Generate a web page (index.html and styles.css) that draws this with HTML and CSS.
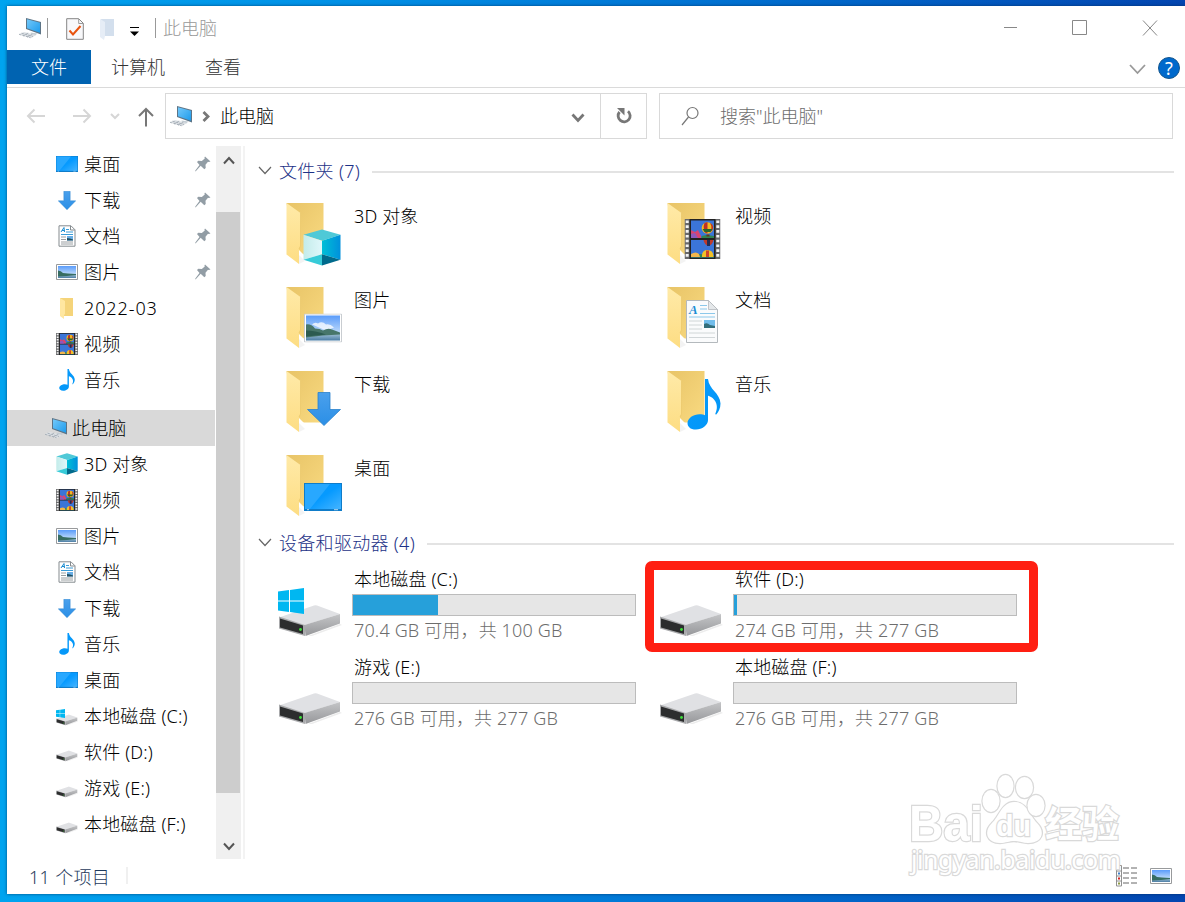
FILE: index.html
```html
<!DOCTYPE html>
<html lang="zh-CN">
<head>
  <meta charset="UTF-8">
  <title>此电脑</title>
  <link rel="stylesheet" href="styles.css">
</head>
<body>
<svg class="sprite" width="0" height="0">
  <defs>
    <linearGradient id="g-back" x1="0" y1="0" x2="1" y2="1"><stop offset="0" stop-color="#e8c467"/><stop offset="1" stop-color="#f9da81"/></linearGradient>
    <linearGradient id="g-front" x1="0" y1="0" x2="0" y2="1"><stop offset="0" stop-color="#ffeaa8"/><stop offset="1" stop-color="#fddd83"/></linearGradient>
    <linearGradient id="g-screen" x1="0" y1="0" x2="1" y2="1"><stop offset="0" stop-color="#72c8fa"/><stop offset="1" stop-color="#1d9bec"/></linearGradient>
    <linearGradient id="g-sky" x1="0" y1="0" x2="0" y2="1"><stop offset="0" stop-color="#5a9cfa"/><stop offset="1" stop-color="#eaf5fb"/></linearGradient>
    <linearGradient id="g-sea" x1="0" y1="0" x2="0" y2="1"><stop offset="0" stop-color="#a4c4d8"/><stop offset="1" stop-color="#4b7da5"/></linearGradient>
    <linearGradient id="g-down" x1="0" y1="0" x2="0" y2="1"><stop offset="0" stop-color="#4aa0ec"/><stop offset="1" stop-color="#2b8fe6"/></linearGradient>
    <linearGradient id="g-cubel"><stop offset="0" stop-color="#c3ecea"/><stop offset="1" stop-color="#e0f7fa"/></linearGradient>
    <linearGradient id="g-cuber"><stop offset="0" stop-color="#00bfd6"/><stop offset="1" stop-color="#0090dc"/></linearGradient>
    <linearGradient id="g-side" x1="0" y1="0" x2="0" y2="1"><stop offset="0" stop-color="#c4c5c7"/><stop offset="1" stop-color="#96979a"/></linearGradient>
    <linearGradient id="g-note" x1="0" y1="0" x2="1" y2="1"><stop offset="0" stop-color="#0a9bff"/><stop offset="1" stop-color="#0096f5"/></linearGradient>
    <linearGradient id="g-desk" x1="0" y1="0" x2="1" y2="1"><stop offset=".5" stop-color="#069aff"/><stop offset="1" stop-color="#45b4ff"/></linearGradient>
  </defs>

  <symbol id="i-pc" viewBox="0 0 24 22">
    <path d="M8 1l15 4v12.500L8 12z" fill="#5d7486"/>
    <path d="M9 2.300l13 3.500v10L9 11.200z" fill="url(#g-screen)"/>
    <path d="M12.500 15.500l7 1-2.500 2-4-1z" fill="#c3ccd3"/>
    <path d="M1 17l5-2 12 3-5 3.300z" fill="#dde1e5"/>
    <path d="M1 17.300l11.500 3.400M3.500 16.200L15 19.500M5 19l6-3.500M9 20l6-3" stroke="#a4adb5" stroke-width=".9" stroke-dasharray="2.500 1" fill="none"/>
  </symbol>
  <symbol id="i-desktop" viewBox="0 0 38 28" preserveAspectRatio="none">
    <path d="M0 0h38v28H0z" fill="#0f7cc9"/>
    <path d="M1 1h36v25H1z" fill="url(#g-desk)"/>
    <path d="M1 1h25L6 26H1z" fill="#28a8ff"/>
    <path d="M3 26.700h2M30 26.700h4" stroke="#fff" stroke-width=".7"/>
  </symbol>
  <symbol id="i-down" viewBox="0 0 34 34" preserveAspectRatio="none">
    <path d="M11 .5h12v17h10.500L17 33.500.500 17.500H11z" fill="url(#g-down)" stroke="#2a81cd" stroke-width=".8"/>
  </symbol>
  <symbol id="i-pic" viewBox="0 0 38 29" preserveAspectRatio="none">
    <path d="M.5.5h37v28H.5z" fill="#fff" stroke="#c9cdd1"/>
    <path d="M2 2h34v25H2z" fill="url(#g-sky)"/>
    <path d="M8 11q3-3 6-1 4-3 8 1 4-1 8 3l-8 3z" fill="#fff" opacity=".75"/>
    <path d="M2 20h34v7H2z" fill="url(#g-sea)"/>
    <path d="M2 11q5-1 9 4 5 0 8 2 5-3 9-1l8 3v2l-17 1-17 2z" fill="#47766a"/>
    <path d="M2 17q9 0 20 4l-20 2z" fill="#2c5b50"/>
  </symbol>
  <symbol id="i-pic-s" viewBox="0 0 22 16">
    <path d="M.5.5h21v15H.5z" fill="#fff" stroke="#989a9c"/>
    <path d="M2 2h18v12H2z" fill="url(#g-sky)"/>
    <path d="M2 10.500h18V14H2z" fill="url(#g-sea)"/>
    <path d="M2 6.500q3 0 5 2.500l5 .5 8 .5v1l-9 1-9 .500z" fill="#376d62"/>
  </symbol>
  <symbol id="i-doc" viewBox="0 0 32 43" preserveAspectRatio="none">
    <path d="M.5.5h22l9 9v33H.5z" fill="#fafbfc" stroke="#b4b9bd"/>
    <path d="M22.500.5v9h9z" fill="#e5e8ea" stroke="#b4b9bd" stroke-width=".8"/>
    <text x="3" y="14" class="doc-letter">A</text>
    <path d="M14 5.500h7M14 9h7M14 13.500h15M3 17h26" stroke="#8cc8ea" stroke-width="1"/>
    <path d="M3 21h13M3 25h13M3 29h13M3 33h26M3 37.500h26" stroke="#ccd1d4" stroke-width=".9"/>
    <path d="M18 20h11v8H18z" fill="#72bdeb"/><path d="M18 24q3-2 6 1l5 1v2H18z" fill="#336e7b"/>
  </symbol>
  <!-- heavier version of the document for 22px -->
  <symbol id="i-doc-s" viewBox="0 0 18 22">
    <path d="M1 .8h12l4 4v16.400H1z" fill="#fff" stroke="#858b8f"/>
    <path d="M12.500 1v4h4.300" fill="none" stroke="#858b8f"/>
    <path d="M3 7l3-4.500L6.500 7M4 5.500h2.500" fill="none" stroke="#198bd0"/>
    <path d="M8 4.500h3M8 7h7M3 9.500h12" stroke="#3a9cd8"/>
    <path d="M3 12h5M3 14.500h5M3 17h12M3 19h12" stroke="#9a9fa2"/>
    <path d="M9 11h6v4.500H9z" fill="#69aee5"/><path d="M9 13l3 .5 3 1v1H9z" fill="#224f60"/>
  </symbol>
  <symbol id="i-video" viewBox="0 0 36 40" preserveAspectRatio="none">
    <path d="M0 0h36v40H0z" fill="#68696b"/>
    <path d="M5 0h26v40H5z" fill="#222"/>
    <path d="M2.700 1.500v38M33.300 1.500v38" stroke="#f5f5f5" stroke-width="3" stroke-dasharray="2.600 2.200"/>
    <path d="M6.500 1.500h23v17.500h-23zM6.500 21h23v17.500h-23z" fill="#3b75d8"/>
    <path d="M6.500 11l4 2 3-2 3 6v2h-10z" fill="#d84573"/>
    <path d="M6.500 15l4-1 3 5h-7z" fill="#8e58bd"/>
    <path d="M17 17l5-1 7.500 1v2H17zM6.500 36l9-1 14 2v1.500h-23z" fill="#328450"/>
    <circle cx="23" cy="9" r="5.800" fill="#f4bb22"/>
    <path d="M20 4q-2 5 1 10l2 .5V3zM25.500 4q3 5-.5 10l3-3q2-5-2.500-7z" fill="#bd3027"/>
    <path d="M18 10h10l-2 3h-6z" fill="#29662c"/>
    <path d="M22 15.500h3v2h-3z" fill="#603c20"/>
    <path d="M19 21h10q-1 5-5 6-4-1-5-6z" fill="#c03a2a"/><path d="M22.500 21h3v6h-3z" fill="#222c54"/>
    <path d="M17.500 38q-.5-7 5.500-7t6 7z" fill="#f3c127"/><path d="M21.500 31.500h3V38h-3z" fill="#cf442c"/>
    <path d="M6.500 35q5-3 8 0l1 3h-9z" fill="#f3b54c"/>
  </symbol>
  <symbol id="i-music" viewBox="0 0 34 52" preserveAspectRatio="none">
    <path d="M18 0h3c1 11 12 14 12.500 25 0 5-2 8.500-4 11-1 .5-1.500 0-1-1C33 25 26 18 21 17v25c0 5-6 9.500-12 9.500C3 51.500.5 48 .5 45c0-5 6-9 12-9 2.500 0 4 .5 5.500 1z" fill="url(#g-note)"/>
  </symbol>
  <symbol id="i-cube" viewBox="0 0 38 38" preserveAspectRatio="none">
    <path d="M19 .5L37.500 6 19 12 .5 6z" fill="#4fc9d7"/>
    <path d="M.5 6L19 12v14L.5 31.500z" fill="url(#g-cubel)"/>
    <path d="M37.500 6L19 12v14l18.500 5.500z" fill="url(#g-cuber)"/>
    <path d="M.5 31.500L19 26v11.500z" fill="#37cbd8"/>
    <path d="M37.500 31.500L19 26v11.500z" fill="#006a8c"/>
  </symbol>
  <symbol id="i-folder" viewBox="0 0 64 68">
    <path d="M16 55l6 6-6 3z" fill="#f3f3f3"/>
    <path d="M3.500 3h37v51.500H12z" fill="url(#g-back)"/>
    <path d="M16 50v5h5z" fill="#fff"/>
    <path d="M3.500 3l14 10v33L16 49v15L3.500 54.500z" fill="url(#g-front)"/>
    <path d="M17.500 13v33L16 49" stroke="#e9c668" stroke-width=".7" fill="none"/>
  </symbol>
  <symbol id="i-folder-s" viewBox="0 0 14 22">
    <path d="M0 1h13v18H3z" fill="#f5d47a"/><path d="M0 1l5 3v13l-1 1v4l-4-3z" fill="#ffe7a0"/>
  </symbol>
  <symbol id="i-drive" viewBox="0 0 64 34">
    <path d="M30 32l32-12 2 1-30 11z" fill="#ececec"/>
    <path d="M1 13.500L36 1.500q1.500-.5 3 0L62 10 27 21z" fill="#e0e1e4"/>
    <path d="M26.500 21L62 10v9.500L27.500 32z" fill="url(#g-side)"/>
    <path d="M1 12.500L27 21v11L1 24.500z" fill="#a9aaac"/>
    <path d="M2 14.500L25 21.500v8.500L2 23.500z" fill="#2c2d2e"/>
    <circle cx="22.500" cy="25.500" r="1.400" fill="#3ee03b"/>
  </symbol>
  <symbol id="i-win" viewBox="0 0 26 26">
    <path d="M0 3.500l11-1.500v10.500H0zM12 1.900L26 0v12.500H12zM0 13.500h11V24L0 22.500zM12 13.500h14V26l-14-1.900z" fill="#00b7f1"/>
  </symbol>
  <symbol id="i-pin" viewBox="0 0 16 16">
    <path d="M10 .5l5.500 5-1.700.6-.8-.3-2.500 3 .2 3.200-1.400 1.200-3.600-3.500L1 15l-1 .5.5-1.200 4-5.300L2 6l1.300-1.200 3.500.3 3-2.500-.4-.8z" fill="#929da5"/>
  </symbol>
  <symbol id="i-chev" viewBox="0 0 14 9"><path d="M1 1l6 6.500L13 1" fill="none" stroke="currentColor" stroke-width="1.200"/></symbol>
</svg>

<div class="window">
  <header class="titlebar">
    <svg class="tb-pc"><use href="#i-pc"/></svg>
    <i class="tb-sep"></i>
    <svg class="tb-check" viewBox="0 0 18 22"><path d="M.7.7h12l4.600 4.600v16H.7z" fill="#f8f8fa" stroke="#858585"/><path d="M12.700 1v4.500h4.500" fill="none" stroke="#999"/><path d="M3.500 12.500l3.500 4L14.500 8" fill="none" stroke="#e8530e" stroke-width="2"/></svg>
    <svg class="tb-folder" viewBox="0 0 14 22"><path d="M1 1h13v17H4z" fill="#d3dfed"/><path d="M0 1l5 3v14l-1 4-4-3z" fill="#e6edf6"/></svg>
    <svg class="tb-more" viewBox="0 0 9 9"><path d="M0 .5h9" stroke="#000"/><path d="M0 4.500h9L4.500 9z"/></svg>
    <i class="tb-sep"></i>
    <span class="tb-title">此电脑</span>
    <div class="win-buttons">
      <svg viewBox="0 0 16 16"><path d="M2 7.500h13" stroke="#888"/></svg>
      <svg viewBox="0 0 16 16"><path d="M.5.500h14v14h-14z" stroke="#888" fill="none"/></svg>
      <svg viewBox="0 0 16 16"><path d="M1 .5l14 15M15 .5L1 15.500" stroke="#888"/></svg>
    </div>
  </header>

  <nav class="tabs">
    <span class="tab tab-file">文件</span>
    <span class="tab">计算机</span>
    <span class="tab">查看</span>
    <svg class="tabs-chev" viewBox="0 0 17 10"><path d="M1 1l7.500 8L16 1" fill="none" stroke="#999" stroke-width="1.800"/></svg>
    <span class="help">?</span>
  </nav>

  <div class="address-row">
    <svg class="nav-arrow dim" viewBox="0 0 20 16"><path d="M19 8H2M8.500 1.500L2 8l6.500 6.500"/></svg>
    <svg class="nav-arrow dim" viewBox="0 0 20 16"><path d="M1 8h17M11.500 1.500L18 8l-6.500 6.500"/></svg>
    <svg class="nav-hist dim" viewBox="0 0 10 7"><path d="M1 1l4 4 4-4"/></svg>
    <svg class="nav-up" viewBox="0 0 16 20"><path d="M8 19.500V2M1 9l7-7 7 7"/></svg>
    <div class="address">
      <svg class="addr-pc"><use href="#i-pc"/></svg>
      <svg class="addr-sep" viewBox="0 0 8 11"><path d="M1.500 1L6 5.500 1.500 10"/></svg>
      <span>此电脑</span>
      <svg class="addr-drop" viewBox="0 0 14 10"><path d="M1.500 1.500L7 7.500l5.500-6"/></svg>
      <div class="refresh"><svg viewBox="0 0 16 18"><path d="M12 4.200A6 6 0 1 1 3.500 5" fill="none"/><path d="M1 1h7.500v7.500z"/></svg></div>
    </div>
    <div class="search">
      <svg viewBox="0 0 18 20"><circle cx="11.500" cy="7" r="5.500"/><path d="M7.500 11L1 19"/></svg>
      <span>搜索"此电脑"</span>
    </div>
  </div>

  <div class="body">
    <aside class="tree">
      <div class="node"><svg class="ic wide"><use href="#i-desktop"/></svg><span>桌面</span><svg class="pin"><use href="#i-pin"/></svg></div>
      <div class="node"><svg class="ic down"><use href="#i-down"/></svg><span>下载</span><svg class="pin"><use href="#i-pin"/></svg></div>
      <div class="node"><svg class="ic"><use href="#i-doc-s"/></svg><span>文档</span><svg class="pin"><use href="#i-pin"/></svg></div>
      <div class="node"><svg class="ic wide"><use href="#i-pic-s"/></svg><span>图片</span><svg class="pin"><use href="#i-pin"/></svg></div>
      <div class="node"><svg class="ic"><use href="#i-folder-s"/></svg><span class="date">2022-03</span></div>
      <div class="node"><svg class="ic film"><use href="#i-video"/></svg><span>视频</span></div>
      <div class="node"><svg class="ic note"><use href="#i-music"/></svg><span>音乐</span></div>
      <div class="node root"><svg class="ic pc"><use href="#i-pc"/></svg><span>此电脑</span></div>
      <div class="node"><svg class="ic"><use href="#i-cube"/></svg><span>3D 对象</span></div>
      <div class="node"><svg class="ic film"><use href="#i-video"/></svg><span>视频</span></div>
      <div class="node"><svg class="ic wide"><use href="#i-pic-s"/></svg><span>图片</span></div>
      <div class="node"><svg class="ic"><use href="#i-doc-s"/></svg><span>文档</span></div>
      <div class="node"><svg class="ic down"><use href="#i-down"/></svg><span>下载</span></div>
      <div class="node"><svg class="ic note"><use href="#i-music"/></svg><span>音乐</span></div>
      <div class="node"><svg class="ic wide"><use href="#i-desktop"/></svg><span>桌面</span></div>
      <div class="node"><svg class="ic" viewBox="0 0 22 22"><use href="#i-drive" y="9" width="22" height="12"/><use href="#i-win" y="4" width="9" height="9"/></svg><span>本地磁盘 (C:)</span></div>
      <div class="node"><svg class="ic" viewBox="0 0 22 22"><use href="#i-drive" y="9" width="22" height="12"/></svg><span>软件 (D:)</span></div>
      <div class="node"><svg class="ic" viewBox="0 0 22 22"><use href="#i-drive" y="9" width="22" height="12"/></svg><span>游戏 (E:)</span></div>
      <div class="node"><svg class="ic" viewBox="0 0 22 22"><use href="#i-drive" y="9" width="22" height="12"/></svg><span>本地磁盘 (F:)</span></div>
    </aside>

    <div class="scrollbar">
      <svg viewBox="0 0 12 9"><path d="M1 7.500l5-5.500 5 5.500"/></svg>
      <div class="thumb"></div>
      <svg viewBox="0 0 12 9"><path d="M1 1.500L6 7l5-5.500"/></svg>
    </div>

    <main class="content">
      <h2 class="group"><svg><use href="#i-chev"/></svg><span>文件夹 (7)</span></h2>
      <div class="folders">
        <div class="folder"><svg viewBox="0 0 64 68"><use href="#i-folder" width="64" height="68"/><use href="#i-cube" x="20" y="29" width="38" height="37"/></svg><span>3D 对象</span></div>
        <div class="folder"><svg viewBox="0 0 64 68"><use href="#i-folder" width="64" height="68"/><use href="#i-video" x="20.500" y="19" width="36" height="40"/></svg><span>视频</span></div>
        <div class="folder"><svg viewBox="0 0 64 68"><use href="#i-folder" width="64" height="68"/><use href="#i-pic" x="21" y="29.500" width="38" height="29"/></svg><span>图片</span></div>
        <div class="folder"><svg viewBox="0 0 64 68"><use href="#i-folder" width="64" height="68"/><use href="#i-doc" x="22" y="16" width="32" height="43"/></svg><span>文档</span></div>
        <div class="folder"><svg viewBox="0 0 64 68"><use href="#i-folder" width="64" height="68"/><use href="#i-down" x="24" y="24" width="34" height="34"/></svg><span>下载</span></div>
        <div class="folder"><svg viewBox="0 0 64 68"><use href="#i-folder" width="64" height="68"/><use href="#i-music" x="23" y="11" width="34" height="51"/></svg><span>音乐</span></div>
        <div class="folder"><svg viewBox="0 0 64 68"><use href="#i-folder" width="64" height="68"/><use href="#i-desktop" x="21" y="31" width="38" height="28"/></svg><span>桌面</span></div>
      </div>

      <h2 class="group"><svg><use href="#i-chev"/></svg><span>设备和驱动器 (4)</span></h2>
      <div class="drives">
        <div class="drive">
          <svg viewBox="0 0 64 52"><use href="#i-drive" y="16" width="64" height="34"/><use href="#i-win" width="26" height="26"/></svg>
          <div class="info"><span class="name">本地磁盘 (C:)</span><div class="bar"><div class="fill" style="width:30%"></div></div><span class="free">70.4 GB 可用，共 100 GB</span></div>
        </div>
        <div class="drive marked">
          <svg viewBox="0 0 64 52"><use href="#i-drive" y="16" width="64" height="34"/></svg>
          <div class="info"><span class="name">软件 (D:)</span><div class="bar"><div class="fill" style="width:1%"></div></div><span class="free">274 GB 可用，共 277 GB</span></div>
        </div>
        <div class="drive">
          <svg viewBox="0 0 64 52"><use href="#i-drive" y="16" width="64" height="34"/></svg>
          <div class="info"><span class="name">游戏 (E:)</span><div class="bar"></div><span class="free">276 GB 可用，共 277 GB</span></div>
        </div>
        <div class="drive">
          <svg viewBox="0 0 64 52"><use href="#i-drive" y="16" width="64" height="34"/></svg>
          <div class="info"><span class="name">本地磁盘 (F:)</span><div class="bar"></div><span class="free">276 GB 可用，共 277 GB</span></div>
        </div>
      </div>
    </main>
  </div>

  <footer class="status">
    <span>11 个项目</span>
    <i class="status-sep"></i>
    <svg class="view-list" viewBox="0 0 22 22"><path d="M.5.500h5v20.500h-5zM.500 6h5M.500 11h5M.500 16h5" fill="#fff" stroke="#909090"/><path d="M7 3h6M15 3h6M7 8h6M15 8h6M7 13h6M15 13h6M7 18h6M15 18h6" stroke="#666"/><path d="M2 7.500h2v2H2z" fill="#3c7dc6"/><path d="M2 12.500h2v2H2z" fill="#d32222"/><path d="M2 17.500h2v2H2z" fill="#8d9a43"/></svg>
    <svg class="view-tiles"><use href="#i-pic-s"/></svg>
  </footer>

  <svg class="watermark" viewBox="0 0 216 110">
    <g class="wm-shape">
      <path d="M107 51c-12 0-15 15-22 21-9 9-5 20 8 20 6 0 9-2 14-2s8 2 14 2c14 0 18-11 9-20-8-8-10-21-23-21z"/>
      <ellipse cx="84" cy="50" rx="8.500" ry="11"/>
      <ellipse cx="98.500" cy="35" rx="8" ry="11"/>
      <ellipse cx="117.500" cy="36.500" rx="8.500" ry="10.500"/>
      <ellipse cx="129" cy="54.500" rx="8.500" ry="10.500"/>
    </g>
    <text class="wm-bai" x="2" y="90" textLength="74" lengthAdjust="spacingAndGlyphs">Bai</text>
    <text class="wm-du" x="89" y="85" textLength="35" lengthAdjust="spacingAndGlyphs">du</text>
    <text class="wm-cn" x="138" y="87" textLength="74">经验</text>
    <text class="wm-url" x="4" y="118" textLength="210">jingyan.baidu.com</text>
  </svg>
</div>
</body>
</html>
```
FILE: styles.css
```css
* {
  box-sizing: border-box;
}
body {
  margin: 0;
  height: 902px;
  padding: 6px 0 8px 7px;
  overflow: hidden;
  background: linear-gradient(90deg, #00a4ef 0%, #0090e6 30%, #0072d2 60%, #0345b0 100%);
  font-family: "Noto Sans", "Noto Sans CJK SC", sans-serif;
  font-size: 18px;
  font-weight: 300;
  color: #000;
}
svg {
  display: block;
  flex: none;
  overflow: visible;
}
.sprite {
  position: absolute;
}
.window {
  position: relative;
  display: flex;
  flex-direction: column;
  height: 888px;
  background: #fff;
  box-shadow: 0 0 3px rgba(0, 40, 80, .7);
}

/* title bar */
.titlebar {
  display: flex;
  align-items: center;
  height: 44px;
  padding-left: 11px;
}
.tb-pc {
  width: 24px;
  height: 22px;
}
.tb-sep {
  width: 1px;
  height: 20px;
  margin-left: 5px;
  background: #999;
}
.tb-check {
  width: 18px;
  height: 22px;
  margin: 2px 0 0 18px;
}
.tb-folder {
  width: 14px;
  height: 22px;
  margin: 2px 0 0 16px;
}
.tb-more {
  width: 9px;
  height: 9px;
  margin: 6px 11px 0 16px;
}
.tb-title {
  margin: -3px 0 0 7px;
  color: #999;
}
.win-buttons {
  display: flex;
  gap: 54px;
  margin-left: auto;
  padding-right: 27px;
}
.win-buttons svg {
  width: 16px;
  height: 16px;
}

/* ribbon tabs */
.tabs {
  display: flex;
  height: 38px;
  padding-right: 5px;
  border-bottom: 1px solid #dadada;
}
.tab {
  height: 34px;
  padding: 0 20px;
  line-height: 35px;
  color: #333;
}
.tab-file {
  padding: 0 24px;
  background: #0063b1;
  color: #fff;
}
.tabs-chev {
  width: 17px;
  height: 10px;
  margin: 14px 12px 0 auto;
}
.help {
  width: 22px;
  height: 22px;
  margin-top: 7px;
  border: 1px solid #14568e;
  border-radius: 50%;
  background: #0069cc;
  color: #fff;
  font-size: 18px;
  font-weight: 400;
  line-height: 20px;
  text-align: center;
}

/* address bar */
.address-row {
  display: flex;
  align-items: center;
  height: 58px;
  padding: 0 12px 2px 19px;
}
.address-row path {
  fill: none;
  stroke: #777;
  stroke-width: 2;
}
.address-row .dim path {
  stroke: #d6d6d6;
}
.nav-arrow {
  width: 20px;
  height: 16px;
  margin-right: 26px;
}
.nav-hist {
  width: 10px;
  height: 7px;
  margin: 0 18px 0 -8px;
}
.nav-up {
  width: 16px;
  height: 20px;
  margin-top: 2px;
}
.address {
  display: flex;
  align-items: center;
  width: 482px;
  height: 46px;
  margin-left: 11px;
  padding-left: 3px;
  border: 1px solid #d9d9d9;
}
.address span,
.search span {
  margin-top: -2px;
}
.address .addr-pc {
  width: 24px;
  height: 22px;
  margin-right: 9px;
}
.address .addr-sep {
  width: 8px;
  height: 11px;
  margin-right: 10px;
}
.addr-sep path,
.address .addr-drop path {
  stroke-width: 2.8;
}
.addr-drop {
  width: 14px;
  height: 10px;
  margin: 3px 15px 0 auto;
}
.refresh {
  display: flex;
  align-items: center;
  justify-content: center;
  width: 46px;
  height: 44px;
  border-left: 1px solid #d9d9d9;
}
.refresh svg {
  width: 16px;
  height: 18px;
}
.address-row .refresh path {
  stroke-width: 2.8;
}
.address-row .refresh path + path {
  fill: #777;
  stroke: none;
}
.search {
  display: flex;
  flex: 1;
  align-items: center;
  height: 46px;
  margin-left: 12px;
  padding-left: 21px;
  border: 1px solid #d9d9d9;
  color: #6d6d6d;
}
.search svg {
  width: 18px;
  height: 20px;
  margin-right: 21px;
}
.search circle,
.search svg path {
  fill: none;
  stroke: #777;
  stroke-width: 1.2;
}

/* body */
.body {
  display: flex;
  height: 713px;
  letter-spacing: .15px;
}
.tree {
  width: 209px;
}
.node {
  display: flex;
  align-items: center;
  width: 208px;
  height: 36px;
  padding-left: 49px;
  line-height: 36px;
  white-space: nowrap;
}
.node span {
  margin-left: 6px;
}
.ic {
  width: 22px;
  height: 22px;
}
.ic.wide {
  height: 16px;
}
.ic.down {
  width: 18px;
  height: 19px;
  margin: 0 2px;
}
.ic.note {
  width: 16px;
  height: 22px;
  margin: 0 3px;
}
.ic.pc {
  width: 24px;
}
.root {
  margin-top: 12px;
  padding-left: 37px;
  background: #d9d9d9;
}
.root span {
  margin-left: 4px;
}
.node .date {
  letter-spacing: .9px;
}
.pin {
  width: 16px;
  height: 16px;
  margin: 0 4px 0 auto;
}
.scrollbar {
  display: flex;
  flex-direction: column;
  align-items: center;
  justify-content: space-between;
  width: 25px;
  padding: 10px 0 8px;
  background: #f0f0f0;
}
.scrollbar svg {
  width: 12px;
  height: 9px;
}
.scrollbar path {
  fill: none;
  stroke: #555;
  stroke-width: 2;
}
.thumb {
  width: 25px;
  height: 581px;
  margin-bottom: 2px;
  border-right: 1px solid #f0f0f0;
  background: #cdcdcd;
}
.content {
  flex: 1;
  margin-left: 2px;
  padding: 8px 11px 0 13px;
  border-left: 2px solid #f3f3f3;
}
.group {
  display: flex;
  align-items: center;
  height: 34px;
  margin: 0;
  color: #1d3287;
  font-size: 18px;
  font-weight: inherit;
  letter-spacing: .3px;
}
.group svg {
  width: 14px;
  height: 9px;
  margin: -2px 7px 0 0;
  color: #666;
}
.group span {
  margin-top: -2px;
}
.group::after {
  content: "";
  flex: 1;
  height: 2px;
  margin: 2px 0 0 12px;
  background: #e3e3e3;
}
.folders {
  display: grid;
  grid-template-columns: 381px 381px;
  grid-auto-rows: 84px;
  margin: 12px 0 -10px 25px;
}
.folder {
  display: flex;
}
.folder svg {
  width: 64px;
  height: 68px;
}
.folder span {
  margin: 3px 0 0 7px;
  line-height: 26px;
}
.doc-letter {
  font: italic bold 13px "Liberation Serif", serif;
  fill: #1d8ed5;
}

/* drives */
.drives {
  display: grid;
  grid-template-columns: 381px 381px;
  grid-auto-rows: 88px;
  margin: 7px 0 0 20px;
}
.drive {
  position: relative;
  display: flex;
}
.drive svg {
  width: 64px;
  height: 52px;
  margin-top: 21px;
}
.info {
  display: flex;
  flex-direction: column;
  width: 284px;
  margin-left: 10px;
}
.name,
.free {
  padding-left: 2px;
  line-height: 26px;
}
.name {
  height: 27px;
  line-height: 24px;
}
.free {
  margin-top: 1px;
  color: #6d6d6d;
}
.bar {
  height: 22px;
  border: 1px solid #bcbcbc;
  background: #e6e6e6;
}
.fill {
  height: 20px;
  background: #26a0da;
}
.marked::after {
  content: "";
  box-sizing: border-box;
  position: absolute;
  left: -14px;
  top: -6px;
  width: 393px;
  height: 91px;
  border: 9px solid #ff1f12;
  border-radius: 7px;
}

/* status bar */
.status {
  display: flex;
  flex: 1;
  align-items: center;
  padding: 0 13px 2px 22px;
  color: #1e395b;
  letter-spacing: .3px;
}
.status-sep {
  width: 2px;
  height: 17px;
  margin: 0 auto 0 16px;
  background: #f0f0f0;
}
.view-list {
  width: 22px;
  height: 22px;
  margin-right: 12px;
}
.view-tiles {
  width: 22px;
  height: 16px;
}

/* watermark over the content */
.watermark {
  position: absolute;
  left: 900px;
  top: 745px;
  width: 216px;
  height: 110px;
  fill: #fff;
  stroke: #d9d9d9;
  stroke-width: 2.4px;
  paint-order: stroke;
}
.wm-bai {
  font: bold 50px "Liberation Sans", sans-serif;
}
.wm-du {
  font: bold 30px "Liberation Sans", sans-serif;
}
.wm-cn {
  font: bold 37px "Noto Sans CJK SC", sans-serif;
}
.wm-url {
  font: 25px "Noto Sans", sans-serif;
}
```
